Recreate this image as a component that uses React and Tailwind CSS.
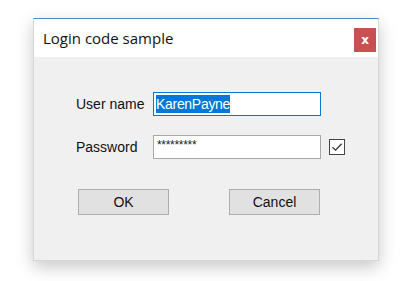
export default function App() {
  return (
    <div className="w-[405px] h-[281px] bg-white pt-[18px] pl-[33px]" style={{ fontFamily: '"Liberation Sans", Arial, sans-serif' }}>
      <div className="w-[346px] h-[243px] flex flex-col border-t border-t-[#3a8fd6] border-x border-b border-x-[#d6d6d6] border-b-[#d6d6d6] shadow-[0_6px_16px_rgba(0,0,0,0.22)] bg-[#f0f0f0]">
        <div className="h-[38px] bg-white flex items-start justify-between pl-[9px] pr-[2px]">
          <div className="mt-[10px] text-[15px] leading-[18px] text-[#111]" style={{ fontFamily: '"Open Sans", "Noto Sans", sans-serif' }}>Login code sample</div>
          <div className="mt-[9px] w-[22px] h-[24px] bg-[#c75050] flex items-center justify-center">
            <span className="text-white text-[12px] font-bold leading-none -mt-[1px]" style={{ fontFamily: '"DejaVu Sans", sans-serif' }}>x</span>
          </div>
        </div>
        <div className="flex flex-col pl-[42px] pt-[35px]">
          <div className="flex items-center h-[24px]">
            <div className="w-[77px] text-[14px] text-[#111]">User name</div>
            <div className="w-[168px] h-[24px] border border-[#0078d7] bg-white flex items-center pl-[2px]">
              <span className="bg-[#0078d7] text-white text-[14px] leading-[18px] tracking-[-0.3px]">KarenPayne</span>
            </div>
          </div>
          <div className="flex items-center h-[24px] mt-[19px]">
            <div className="w-[77px] text-[14px] text-[#111]">Password</div>
            <div className="w-[168px] h-[24px] border border-[#a8a8a8] bg-white flex items-start pl-[3px]">
              <span className="text-[12px] leading-[14px] mt-[2px] tracking-[-0.3px] text-[#222]">*********</span>
            </div>
            <div className="ml-[8px] w-[16px] h-[16px] border border-[#444] bg-white flex items-center justify-center">
              <svg width="12" height="12" viewBox="0 0 12 12">
                <path d="M1.5 6.3 L4.6 9.2 L10.6 2.8" fill="none" stroke="#333" strokeWidth="1.3" />
              </svg>
            </div>
          </div>
          <div className="flex mt-[30px] pl-[2px]">
            <div className="w-[91px] h-[26px] bg-[#e1e1e1] border border-[#adadad] flex items-center justify-center text-[14px] text-[#111]">OK</div>
            <div className="ml-[60px] w-[91px] h-[26px] bg-[#e1e1e1] border border-[#adadad] flex items-center justify-center text-[14px] text-[#111]">Cancel</div>
          </div>
        </div>
      </div>
    </div>
  );
}
